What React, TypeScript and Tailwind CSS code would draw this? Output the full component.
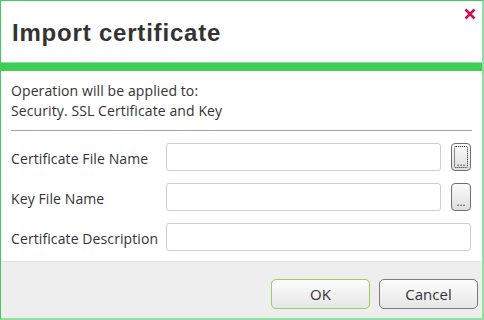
import React from "react";

const font = { fontFamily: '"Open Sans", "Noto Sans", sans-serif' };

function Dots({ focus }: { focus?: boolean }) {
  return (
    <button className="relative w-[20px] h-[28px] ml-[10px] shrink-0 rounded-[4px] border border-[#707070] bg-gradient-to-b from-[#fbfbfb] to-[#dedede] flex items-end justify-center pb-[3px] text-[11px] leading-none text-[#333]">
      {focus && (
        <span className="absolute inset-[2px] rounded-[2px] border border-dotted border-[#222]" />
      )}
      <span className="relative">...</span>
    </button>
  );
}

export default function App() {
  return (
    <div
      className="w-[484px] h-[320px] flex flex-col bg-white border-l border-t border-[#3dcd58] border-r-2 border-b-2 border-r-[#8fe09f] border-b-[#8fe09f] overflow-hidden"
      style={font}
    >
      <div className="relative h-[61px] shrink-0 flex items-center pl-[11px]">
        <h1
          className="text-[24px] font-bold text-[#333] tracking-[0.8px] mt-[2px]"
          style={{ fontFamily: '"Liberation Sans", Arial, sans-serif' }}
        >
          Import certificate
        </h1>
        <svg
          className="absolute left-[463px] top-[7px]"
          width="12"
          height="12"
          viewBox="0 0 12 12"
        >
          <path d="M1.5 1.5 L10.5 10.5 M10.5 1.5 L1.5 10.5" stroke="#c8114f" strokeWidth="2.5" />
        </svg>
      </div>
      <div className="h-px shrink-0 bg-[#8be29a]" />
      <div className="h-[8px] shrink-0 bg-[#3dcd58]" />
      <div className="flex-1 flex flex-col px-[10px] pt-[10px] text-[14px] leading-[20px] text-[#333] tracking-[0.1px]">
        <div>Operation will be applied to:</div>
        <div>Security. SSL Certificate and Key</div>
        <div className="h-px bg-[#a0a0a0] mt-[9px]" />
        <div className="flex flex-col gap-[12px] mt-[12px] pr-[1px]">
          <div className="flex items-center">
            <div className="w-[155px] shrink-0 translate-y-[2px]">Certificate File Name</div>
            <div className="flex-1 h-[28px] rounded-[3px] border border-[#cfcfcf]" />
            <Dots focus />
          </div>
          <div className="flex items-center">
            <div className="w-[155px] shrink-0 translate-y-[2px]">Key File Name</div>
            <div className="flex-1 h-[28px] rounded-[3px] border border-[#cfcfcf]" />
            <Dots />
          </div>
          <div className="flex items-center">
            <div className="w-[155px] shrink-0 translate-y-[2px]">Certificate Description</div>
            <div className="flex-1 h-[28px] rounded-[3px] border border-[#cfcfcf]" />
          </div>
        </div>
      </div>
      <div className="h-[57px] shrink-0 bg-[#eeeeee] border-t border-[#e2e2e2] flex justify-end items-start pt-[17px] pr-[4px] gap-[9px]">
        <button className="w-[99px] h-[30px] rounded-[5px] border border-[#9ccc5a] bg-gradient-to-b from-[#fdfdfd] to-[#e6e6e6] text-[15px] text-[#333]">
          OK
        </button>
        <button className="w-[99px] h-[30px] rounded-[5px] border border-[#7a7a7a] bg-gradient-to-b from-[#fdfdfd] to-[#e6e6e6] text-[15px] text-[#333]">
          Cancel
        </button>
      </div>
    </div>
  );
}
